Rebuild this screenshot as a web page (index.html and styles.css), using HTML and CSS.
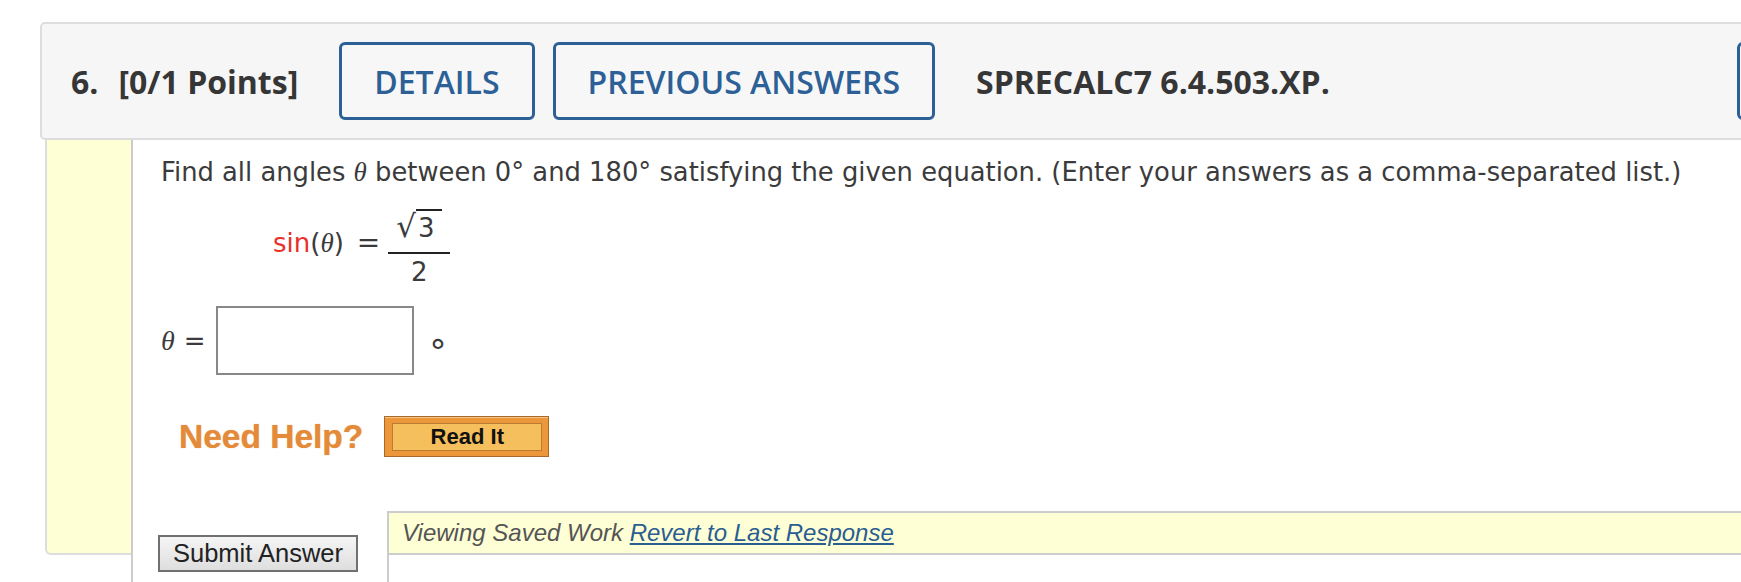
FILE: index.html
```html
<!DOCTYPE html>
<html>
<head>
<meta charset="utf-8">
<title>Question 6</title>
<link rel="stylesheet" href="styles.css">
</head>
<body>
<div class="page">
  <div class="qhead">
    <span class="qnum">6.</span>
    <span class="qpts">[0/1 Points]</span>
    <button class="hbtn first">DETAILS</button>
    <button class="hbtn">PREVIOUS ANSWERS</button>
    <span class="qid">SPRECALC7 6.4.503.XP.</span>
    <button class="hbtn notes">MY NOTES</button>
  </div>
  <div class="qbody">
    <div class="side"></div>
    <div class="main">
      <p class="prompt">Find all angles <i class="th">θ</i> between 0° and 180° satisfying the given equation. (Enter your answers as a comma-separated list.)</p>
      <div class="eq">
        <div class="lhs"><span class="fn">sin</span>(<i class="th">θ</i>)<span class="eqs">=</span></div>
        <div class="frac">
          <div class="num"><span class="rad">√</span><span class="radicand">3</span></div>
          <div class="den">2</div>
        </div>
      </div>
      <div class="ans">
        <i class="th">θ</i><span class="eqs2">=</span><input class="box" type="text"><span class="deg">°</span>
      </div>
      <div class="help">
        <span class="need">Need Help?</span>
        <span class="readit"><span class="readit-in">Read It</span></span>
      </div>
      <div class="submit-row">
        <button class="submit">Submit Answer</button>
        <div class="saved">
          <div class="saved-head">Viewing Saved Work <a href="#">Revert to Last Response</a></div>
          <div class="saved-body"></div>
        </div>
      </div>
    </div>
  </div>
</div>
</body>
</html>
```
FILE: styles.css
```css
html, body {
  margin: 0;
  overflow: hidden;
  background: #fff;
}
.page {
  padding: 22px 0 0 40px;
  width: 2000px;
}
.qhead {
  display: flex;
  align-items: center;
  box-sizing: border-box;
  height: 118px;
  width: 2000px;
  background: #f6f6f6;
  border: 2px solid #ddd;
  border-radius: 5px;
  padding-left: 29px;
  font-family: "Open Sans", sans-serif;
  font-size: 32px;
  color: #363636;
}
.qnum, .qpts, .qid {
  font-weight: 700;
  white-space: nowrap;
  flex-shrink: 0;
}
.qpts { margin-left: 20px; }
.qid { margin-left: 41px; }
.hbtn {
  flex-shrink: 0;
  box-sizing: border-box;
  height: 78px;
  padding: 0 32px;
  margin: 0 0 0 18px;
  border: 3px solid #2c6096;
  border-radius: 6px;
  background: #f7f7f7;
  color: #2c6096;
  font: 600 32px "Open Sans", sans-serif;
  white-space: nowrap;
}
.hbtn.first { margin-left: 41px; }
.hbtn.notes { margin-left: 407px; }

.qbody {
  display: flex;
  align-items: flex-start;
  margin-left: 5px;
}
.side {
  flex: 0 0 auto;
  width: 84px;
  height: 413px;
  background: #ffffd5;
  border-left: 2px solid #ddd;
  border-bottom: 2px solid #ddd;
  border-bottom-left-radius: 6px;
}
.main {
  flex: 1;
  border-left: 2px solid #ccc;
  padding-left: 28px;
  min-height: 480px;
  color: #3b3b3b;
}
.prompt {
  margin: 0;
  padding-top: 15px;
  font: 25.8px/34px "DejaVu Sans", Verdana, sans-serif;
  white-space: nowrap;
}
.th {
  font-family: "Liberation Serif", serif;
  font-style: italic;
  font-size: 27px;
}
.eq {
  display: flex;
  align-items: flex-start;
  margin: 20px 0 0 112px;
  font: 26px/26px "DejaVu Sans", sans-serif;
}
.lhs {
  margin-top: 21px;
  white-space: nowrap;
}
.fn { color: #e8302a; }
.eqs { margin: 0 8px 0 13px; font-size: 28px; }
.frac {
  display: flex;
  flex-direction: column;
  align-items: center;
  width: 62px;
}
.num {
  display: flex;
  align-items: flex-start;
  justify-content: center;
  box-sizing: border-box;
  width: 100%;
  padding-bottom: 11px;
  border-bottom: 2px solid #222;
}
.rad {
  font-size: 31px;
  line-height: 30px;
  margin-top: 2px;
}
.radicand {
  border-top: 2px solid #222;
  padding: 4px 8px 0 2px;
}
.den { padding-top: 5px; }

.ans {
  display: flex;
  align-items: center;
  margin-top: 21px;
  font: 24px/26px "DejaVu Sans", sans-serif;
}
.ans .th { font-size: 28px; }
.eqs2 { margin: 0 10px 0 9px; font-size: 26px; }
.box {
  box-sizing: border-box;
  width: 198px;
  height: 69px;
  margin: 0;
  padding: 0;
  border: 2px solid #888;
  background: #fff;
}
.deg {
  align-self: flex-start;
  margin: 30px 0 0 16px;
  font-size: 34px;
  line-height: 32px;
}

.help {
  display: flex;
  align-items: center;
  margin-top: 41px;
}
.need {
  margin-left: 18px;
  font: 700 33.5px/40px "Liberation Sans", Arial, sans-serif;
  color: #e38b3b;
  text-shadow: 0 0 1px rgba(227, 139, 59, 0.8);
  white-space: nowrap;
}
.readit {
  box-sizing: border-box;
  display: flex;
  width: 165px;
  height: 41px;
  margin-left: 21px;
  padding: 6px 6px 5px 7px;
  background: #ec973a;
  border: 1px solid #a86a2a;
  box-shadow: inset 0 1px 0 #f6c383;
}
.readit-in {
  flex: 1;
  display: flex;
  align-items: center;
  justify-content: center;
  background: #f4bf5c;
  border: 1px solid #b97d35;
  font: 700 22px/1 "Liberation Sans", Arial, sans-serif;
  color: #111;
}

.submit-row {
  display: flex;
  align-items: flex-start;
  margin-top: 54px;
}
.submit {
  flex-shrink: 0;
  box-sizing: border-box;
  width: 200px;
  height: 37px;
  margin: 24px 0 0 -3px;
  padding: 0;
  border: 2px solid #707070;
  background: linear-gradient(#f5f5f5, #dedede);
  font: 25.5px/1 "Liberation Sans", Arial, sans-serif;
  color: #222;
}
.saved {
  flex: 1;
  margin-left: 29px;
  border: 2px solid #ccc;
}
.saved-head {
  height: 40px;
  padding-left: 13px;
  background: #ffffd5;
  border-bottom: 2px solid #ccc;
  font: italic 24px/40px "Liberation Sans", Arial, sans-serif;
  color: #555;
  white-space: nowrap;
}
.saved-head a { color: #2a5d92; }
.saved-body { height: 100px; }
```
